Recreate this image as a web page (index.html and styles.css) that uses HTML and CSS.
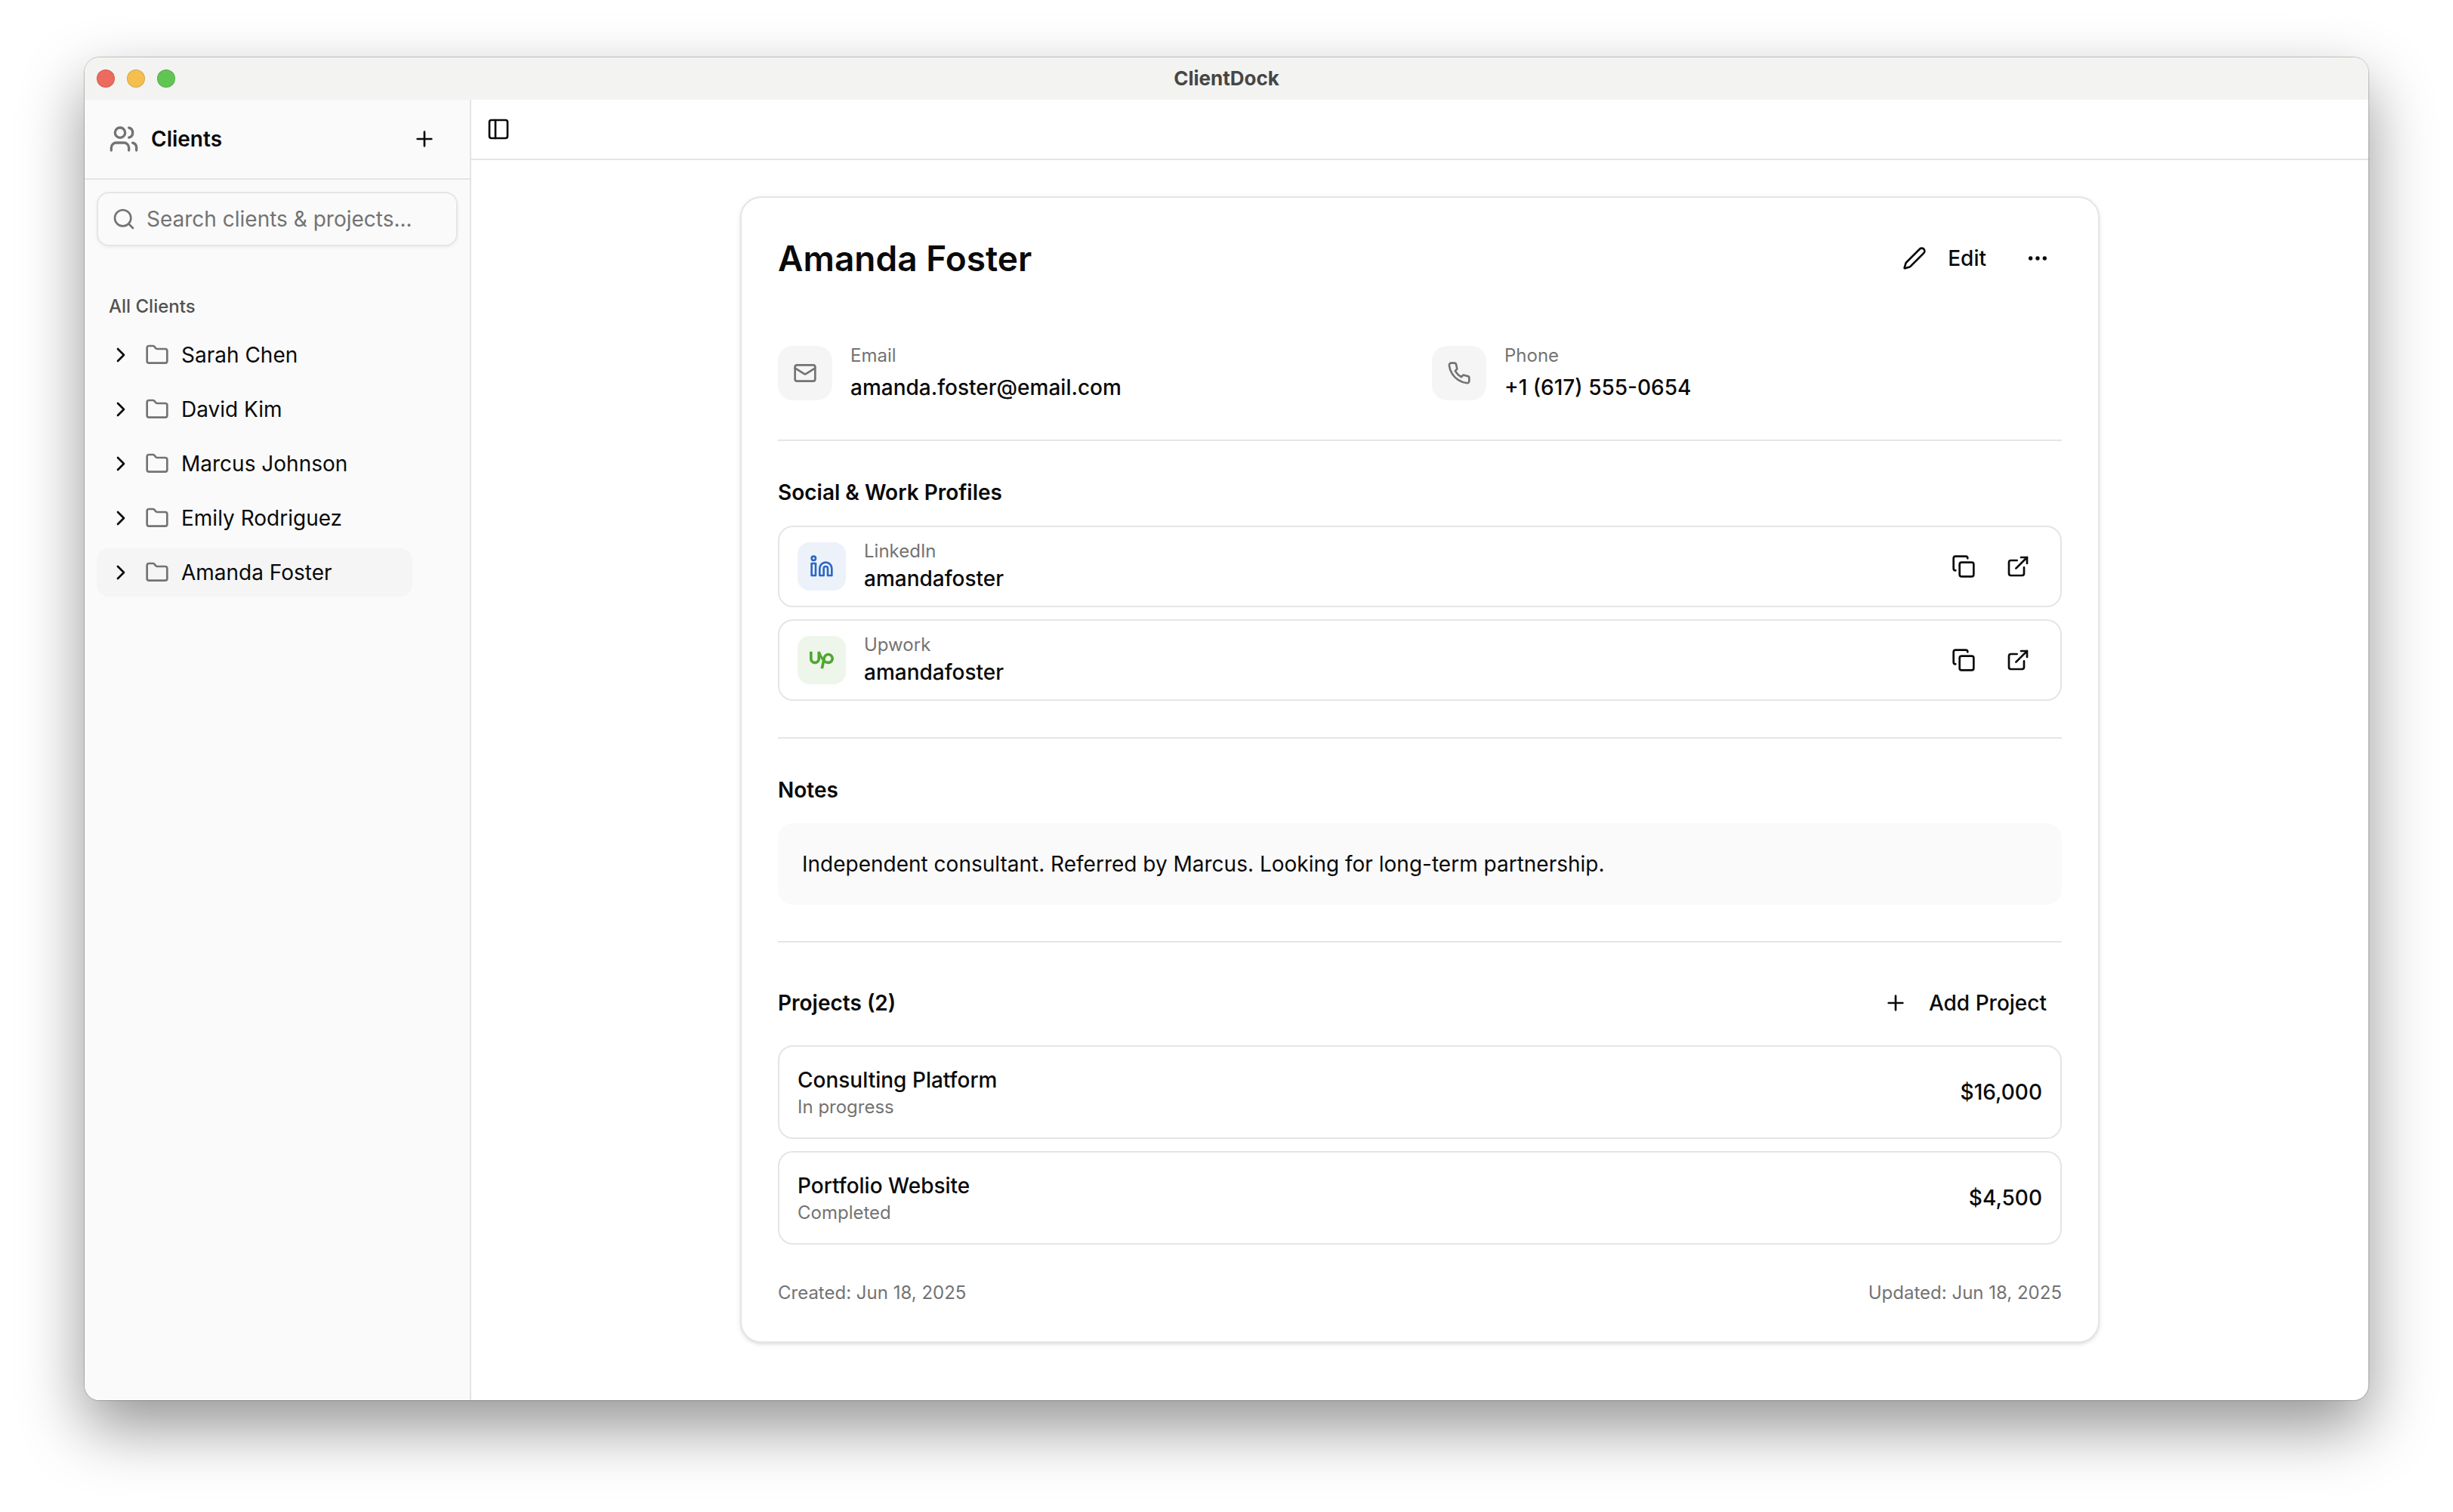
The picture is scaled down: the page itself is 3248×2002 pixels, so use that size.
FILE: index.html
```html
<!DOCTYPE html>
<html lang="en">
<head>
<meta charset="utf-8">
<meta name="viewport" content="width=device-width, initial-scale=1">
<title>ClientDock</title>
<link rel="stylesheet" href="styles.css">
</head>
<body>
<svg class="sprite" aria-hidden="true">
  <symbol id="users" viewBox="0 0 24 24"><path d="M16 21v-2a4 4 0 0 0-4-4H6a4 4 0 0 0-4 4v2"/><circle cx="9" cy="7" r="4"/><path d="M22 21v-2a4 4 0 0 0-3-3.87"/><path d="M16 3.13a4 4 0 0 1 0 7.75"/></symbol>
  <symbol id="plus" viewBox="0 0 24 24"><path d="M5 12h14M12 5v14"/></symbol>
  <symbol id="search" viewBox="0 0 24 24"><circle cx="11" cy="11" r="8"/><path d="m21 21-4.3-4.3"/></symbol>
  <symbol id="chevron" viewBox="0 0 24 24"><path d="m9 18 6-6-6-6"/></symbol>
  <symbol id="folder" viewBox="0 0 24 24"><path d="M20 20a2 2 0 0 0 2-2V8a2 2 0 0 0-2-2h-7.900a2 2 0 0 1-1.690-.9L9.600 3.900A2 2 0 0 0 7.930 3H4a2 2 0 0 0-2 2v13a2 2 0 0 0 2 2Z"/></symbol>
  <symbol id="panel" viewBox="0 0 24 24"><rect x="3" y="3" width="18" height="18" rx="2"/><path d="M9 3v18"/></symbol>
  <symbol id="pencil" viewBox="0 0 24 24"><path d="M21.174 6.812a1 1 0 0 0-3.986-3.987L3.842 16.174a2 2 0 0 0-.5.830l-1.321 4.352a.5.5 0 0 0 .623.622l4.353-1.320a2 2 0 0 0 .830-.497z"/></symbol>
  <symbol id="dots" viewBox="0 0 24 24"><circle cx="12" cy="12" r="1"/><circle cx="19" cy="12" r="1"/><circle cx="5" cy="12" r="1"/></symbol>
  <symbol id="mail" viewBox="0 0 24 24"><rect x="2" y="4" width="20" height="16" rx="2"/><path d="m22 7-8.970 5.700a1.940 1.940 0 0 1-2.060 0L2 7"/></symbol>
  <symbol id="phone" viewBox="0 0 24 24"><path d="M22 16.920v3a2 2 0 0 1-2.180 2 19.790 19.790 0 0 1-8.630-3.070 19.500 19.500 0 0 1-6-6 19.790 19.790 0 0 1-3.070-8.670A2 2 0 0 1 4.110 2h3a2 2 0 0 1 2 1.720 12.840 12.840 0 0 0 .7 2.810 2 2 0 0 1-.45 2.110L8.090 9.910a16 16 0 0 0 6 6l1.270-1.270a2 2 0 0 1 2.110-.45 12.840 12.840 0 0 0 2.810.7A2 2 0 0 1 22 16.920z"/></symbol>
  <symbol id="linkedin" viewBox="0 0 24 24"><path d="M16 8a6 6 0 0 1 6 6v7h-4v-7a2 2 0 0 0-4 0v7h-4v-7a6 6 0 0 1 6-6z"/><rect x="2" y="9" width="4" height="12"/><circle cx="4" cy="4" r="2"/></symbol>
  <symbol id="upwork" viewBox="0 0 24 24"><path d="M18.561 13.158c-1.102 0-2.135-.467-3.074-1.227l.228-1.076.008-.042c.207-1.143.849-3.060 2.839-3.060 1.492 0 2.703 1.212 2.703 2.703-.001 1.489-1.212 2.702-2.704 2.702zm0-8.140c-2.539 0-4.510 1.649-5.310 4.366-1.220-1.834-2.148-4.036-2.687-5.892H7.828v7.112c-.002 1.406-1.141 2.546-2.547 2.548-1.405-.002-2.543-1.143-2.545-2.548V3.492H0v7.112c0 2.914 2.370 5.303 5.281 5.303 2.913 0 5.283-2.389 5.283-5.303v-1.190c.529 1.107 1.182 2.229 1.974 3.221l-1.673 7.873h2.797l1.213-5.710c1.063.679 2.285 1.109 3.686 1.109 3 0 5.439-2.452 5.439-5.450 0-3-2.439-5.439-5.439-5.439z"/></symbol>
  <symbol id="copy" viewBox="0 0 24 24"><rect x="8" y="8" width="14" height="14" rx="2"/><path d="M4 16c-1.100 0-2-.9-2-2V4c0-1.100.9-2 2-2h10c1.100 0 2 .9 2 2"/></symbol>
  <symbol id="external" viewBox="0 0 24 24"><path d="M15 3h6v6"/><path d="M10 14 21 3"/><path d="M18 13v6a2 2 0 0 1-2 2H5a2 2 0 0 1-2-2V8a2 2 0 0 1 2-2h6"/></symbol>
</svg>

<div class="window">
  <header class="titlebar">
    <div class="lights">
      <button class="light light-close" aria-label="Close"></button>
      <button class="light light-minimize" aria-label="Minimize"></button>
      <button class="light light-zoom" aria-label="Zoom"></button>
    </div>
    <div class="app-name">ClientDock</div>
  </header>

  <div class="body">
    <aside class="sidebar">
      <div class="sidebar-header">
        <svg class="icon icon-large muted"><use href="#users"/></svg>
        <h2 class="sidebar-title">Clients</h2>
        <button class="button button-small" aria-label="Add client"><svg class="icon"><use href="#plus"/></svg></button>
      </div>
      <label class="search">
        <svg class="icon muted"><use href="#search"/></svg>
        <input class="search-input" type="search" placeholder="Search clients &amp; projects..." aria-label="Search clients and projects">
      </label>
      <nav class="clients">
        <h3 class="clients-label">All Clients</h3>
        <ul class="client-list">
          <li class="client"><button class="expand" aria-label="Expand Sarah Chen"><svg class="icon"><use href="#chevron"/></svg></button><a class="client-link" href="#"><svg class="icon muted"><use href="#folder"/></svg>Sarah Chen</a></li>
          <li class="client"><button class="expand" aria-label="Expand David Kim"><svg class="icon"><use href="#chevron"/></svg></button><a class="client-link" href="#"><svg class="icon muted"><use href="#folder"/></svg>David Kim</a></li>
          <li class="client"><button class="expand" aria-label="Expand Marcus Johnson"><svg class="icon"><use href="#chevron"/></svg></button><a class="client-link" href="#"><svg class="icon muted"><use href="#folder"/></svg>Marcus Johnson</a></li>
          <li class="client"><button class="expand" aria-label="Expand Emily Rodriguez"><svg class="icon"><use href="#chevron"/></svg></button><a class="client-link" href="#"><svg class="icon muted"><use href="#folder"/></svg>Emily Rodriguez</a></li>
          <li class="client client-active"><button class="expand" aria-label="Expand Amanda Foster"><svg class="icon"><use href="#chevron"/></svg></button><a class="client-link" href="#" aria-current="page"><svg class="icon muted"><use href="#folder"/></svg>Amanda Foster</a></li>
        </ul>
      </nav>
    </aside>

    <div class="main">
      <div class="toolbar">
        <button class="button button-small" aria-label="Toggle sidebar"><svg class="icon"><use href="#panel"/></svg></button>
      </div>
      <main class="content">
        <article class="card">
          <header class="card-header">
            <h1 class="card-title">Amanda Foster</h1>
            <div class="card-actions">
              <button class="button button-text"><svg class="icon"><use href="#pencil"/></svg>Edit</button>
              <button class="button button-icon" aria-label="More actions"><svg class="icon"><use href="#dots"/></svg></button>
            </div>
          </header>

          <div class="contacts">
            <div class="contact">
              <span class="contact-icon"><svg class="icon muted"><use href="#mail"/></svg></span>
              <div class="contact-text"><span class="caption">Email</span><span class="value">amanda.foster@email.com</span></div>
            </div>
            <div class="contact">
              <span class="contact-icon"><svg class="icon muted"><use href="#phone"/></svg></span>
              <div class="contact-text"><span class="caption">Phone</span><span class="value">+1 (617) 555-0654</span></div>
            </div>
          </div>

          <section class="section">
            <h2 class="section-title">Social &amp; Work Profiles</h2>
            <div class="rows">
              <div class="row profile">
                <span class="profile-icon linkedin"><svg class="icon"><use href="#linkedin"/></svg></span>
                <div class="row-text"><span class="caption">LinkedIn</span><span class="value">amandafoster</span></div>
                <div class="profile-actions">
                  <button class="button button-icon" aria-label="Copy LinkedIn profile"><svg class="icon"><use href="#copy"/></svg></button>
                  <a class="button button-icon" href="#" aria-label="Open LinkedIn profile"><svg class="icon"><use href="#external"/></svg></a>
                </div>
              </div>
              <div class="row profile">
                <span class="profile-icon upwork"><svg class="icon"><use href="#upwork"/></svg></span>
                <div class="row-text"><span class="caption">Upwork</span><span class="value">amandafoster</span></div>
                <div class="profile-actions">
                  <button class="button button-icon" aria-label="Copy Upwork profile"><svg class="icon"><use href="#copy"/></svg></button>
                  <a class="button button-icon" href="#" aria-label="Open Upwork profile"><svg class="icon"><use href="#external"/></svg></a>
                </div>
              </div>
            </div>
          </section>

          <section class="section">
            <h2 class="section-title">Notes</h2>
            <p class="notes">Independent consultant. Referred by Marcus. Looking for long-term partnership.</p>
          </section>

          <section class="section">
            <div class="section-header">
              <h2 class="section-title">Projects (2)</h2>
              <button class="button button-text"><svg class="icon"><use href="#plus"/></svg>Add Project</button>
            </div>
            <div class="rows">
              <a class="row project" href="#">
                <div class="row-text"><span class="value">Consulting Platform</span><span class="caption">In progress</span></div>
                <span class="value">$16,000</span>
              </a>
              <a class="row project" href="#">
                <div class="row-text"><span class="value">Portfolio Website</span><span class="caption">Completed</span></div>
                <span class="value">$4,500</span>
              </a>
            </div>
          </section>

          <footer class="card-footer caption">
            <span>Created: Jun 18, 2025</span>
            <span>Updated: Jun 18, 2025</span>
          </footer>
        </article>
      </main>
    </div>
  </div>
</div>
</body>
</html>
```
FILE: styles.css
```css
:root {
  --text: #0a0a0a;
  --muted: #737373;
  --border: #e5e5e5;
  --surface: #fafafa;
  --accent: #f5f5f5;
}

* {
  box-sizing: border-box;
}

body {
  display: flex;
  flex-direction: column;
  min-height: 100vh;
  margin: 0;
  padding: 76px 112px 148px;
  background: #fff;
  color: var(--text);
  font: 400 28px/40px Inter, "Liberation Sans", sans-serif;
}

h1, h2, h3, p, ul {
  margin: 0;
  padding: 0;
}

ul {
  list-style: none;
}

a {
  color: inherit;
  text-decoration: none;
}

button, input {
  margin: 0;
  padding: 0;
  border: 0;
  background: none;
  color: inherit;
  font: inherit;
}

.sprite {
  display: none;
}

.icon {
  flex: none;
  display: block;
  width: 32px;
  height: 32px;
  fill: none;
  stroke: currentColor;
  stroke-width: 2;
  stroke-linecap: round;
  stroke-linejoin: round;
}

.icon-large {
  width: 40px;
  height: 40px;
}

.muted {
  color: var(--muted);
}

.button {
  display: flex;
  align-items: center;
  justify-content: center;
  height: 64px;
  border-radius: 16px;
  font-weight: 500;
}

.button-small {
  width: 56px;
  height: 56px;
}

.button-icon {
  width: 64px;
}

.button-text {
  gap: 28px;
  padding: 0 20px;
}

/* Window frame */

.window {
  flex: 1;
  display: flex;
  flex-direction: column;
  overflow: hidden;
  border-radius: 20px;
  background: #fff;
  box-shadow: 0 0 0 1px rgba(0, 0, 0, 0.2), 0 36px 84px rgba(0, 0, 0, 0.42);
}

.titlebar {
  display: grid;
  grid-template-columns: 1fr auto 1fr;
  align-items: center;
  height: 56px;
  padding: 0 16px;
  background: #f3f3f1;
}

.lights {
  display: flex;
  gap: 16px;
}

.light {
  width: 24px;
  height: 24px;
  border: 1px solid rgba(0, 0, 0, 0.12);
  border-radius: 50%;
}

.light-close {
  background: #ed6a5e;
}

.light-minimize {
  background: #f5bf4f;
}

.light-zoom {
  background: #61c554;
}

.app-name {
  color: #464646;
  font-size: 26px;
  font-weight: 700;
}

.body {
  flex: 1;
  display: flex;
}

/* Sidebar */

.sidebar {
  flex: none;
  width: 512px;
  border-right: 2px solid var(--border);
  background: var(--surface);
}

.sidebar-header {
  display: flex;
  align-items: center;
  gap: 16px;
  height: 106px;
  padding: 0 32px;
  border-bottom: 2px solid var(--border);
}

.sidebar-title {
  flex: 1;
  font-size: 28px;
  font-weight: 600;
}

.search {
  display: flex;
  align-items: center;
  gap: 14px;
  height: 72px;
  margin: 16px 16px 48px;
  padding: 0 18px;
  border: 2px solid var(--border);
  border-radius: 16px;
  box-shadow: 0 2px 4px rgba(0, 0, 0, 0.05);
}

.search-input {
  flex: 1;
  min-width: 0;
  outline: 0;
}

.search-input::placeholder {
  color: var(--muted);
}

.clients {
  padding: 0 16px;
}

.clients-label {
  padding: 0 16px;
  color: #525252;
  font-size: 24px;
  font-weight: 500;
  line-height: 64px;
}

.client-list {
  display: grid;
  gap: 8px;
  padding-right: 60px;
}

.client {
  display: flex;
  align-items: center;
  gap: 16px;
  height: 64px;
  padding: 0 16px;
  border-radius: 16px;
}

.client-active {
  background: var(--accent);
}

.client-link {
  flex: 1;
  display: flex;
  align-items: center;
  gap: 16px;
}

/* Main pane */

.main {
  flex: 1;
  min-width: 0;
}

.toolbar {
  display: flex;
  align-items: center;
  height: 80px;
  padding: 0 8px;
  border-bottom: 2px solid var(--border);
}

.content {
  padding: 48px;
}

.card {
  max-width: 1800px;
  margin: 0 auto;
  padding: 48px;
  border: 2px solid var(--border);
  border-radius: 28px;
  background: #fff;
  box-shadow: 0 2px 6px rgba(0, 0, 0, 0.1), 0 2px 4px -2px rgba(0, 0, 0, 0.1);
}

.card-header,
.section-header,
.card-footer {
  display: flex;
  align-items: center;
  justify-content: space-between;
}

.card-title {
  font-size: 46px;
  font-weight: 600;
  line-height: 64px;
}

.card-actions {
  display: flex;
  gap: 16px;
}

.contacts {
  display: grid;
  grid-template-columns: 1fr 1fr;
  gap: 32px;
  min-height: 80px;
  margin-top: 80px;
}

.contact {
  display: flex;
  align-items: center;
  gap: 24px;
}

.contact-icon,
.profile-icon {
  flex: none;
  display: grid;
  place-items: center;
  width: 72px;
  height: 72px;
  border-radius: 20px;
  background: var(--accent);
}

.contact-text,
.row-text {
  display: grid;
}

.contact-text {
  gap: 6px;
}

.caption {
  color: var(--muted);
  font-size: 24px;
  line-height: 32px;
}

.value {
  font-weight: 500;
}

.section {
  margin-top: 48px;
  padding-top: 48px;
  border-top: 2px solid var(--border);
}

.section-title {
  font-size: 28px;
  font-weight: 600;
}

.rows {
  display: grid;
  gap: 16px;
  margin-top: 24px;
}

.row {
  display: flex;
  align-items: center;
  gap: 24px;
  padding: 16px 24px;
  border: 2px solid var(--border);
  border-radius: 20px;
}

.row-text {
  flex: 1;
}

.project {
  padding: 24px;
}

.profile-icon {
  width: 64px;
  height: 64px;
  border-radius: 16px;
}

.linkedin {
  background: #edf2fa;
  color: #2d68c4;
}

.upwork {
  background: #eef6ec;
  color: #4fa830;
}

.upwork .icon {
  fill: currentColor;
  stroke: none;
}

.profile-actions {
  display: flex;
  gap: 8px;
}

.notes {
  margin-top: 24px;
  padding: 32px;
  border-radius: 20px;
  background: var(--surface);
  line-height: 44px;
}

.card-footer {
  margin-top: 48px;
}
```
